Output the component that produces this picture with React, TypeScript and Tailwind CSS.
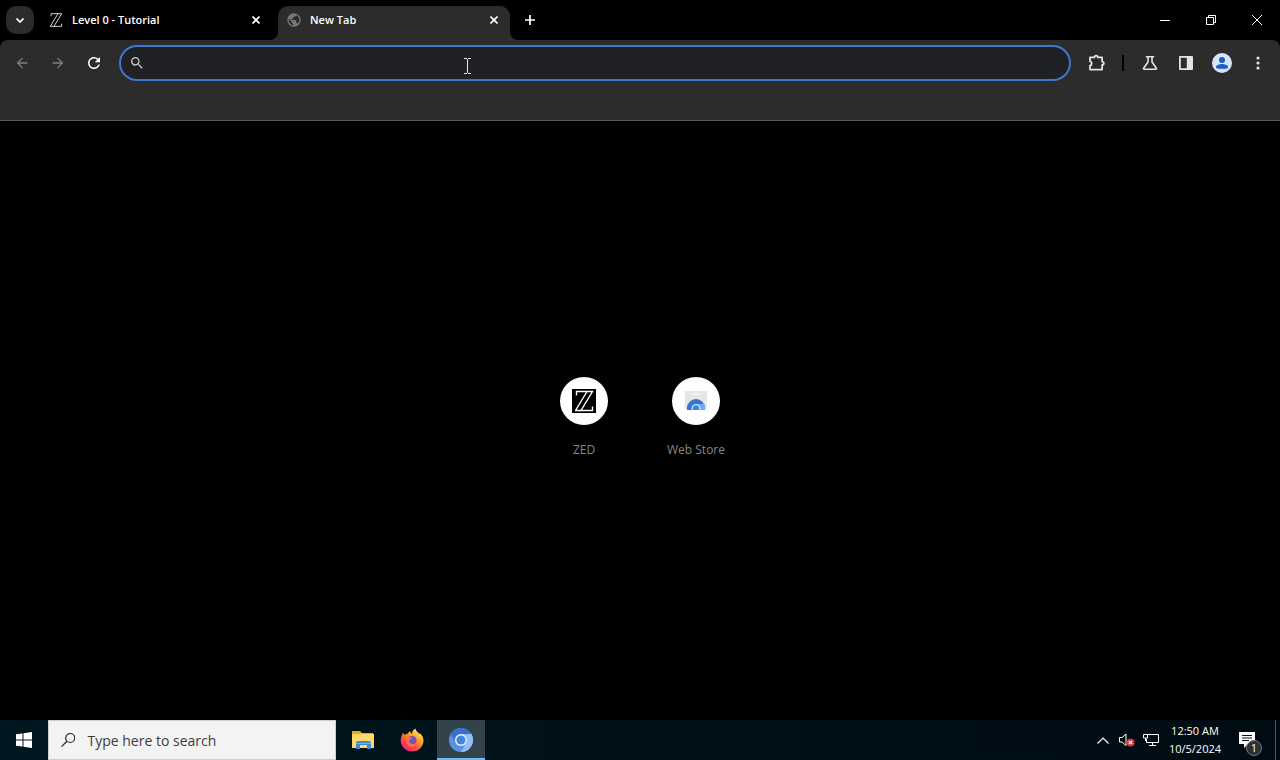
import type { ReactNode } from "react";
import { MdArrowBack, MdArrowForward, MdPublic, MdRefresh, MdSearch } from "react-icons/md";

function ZedMark({ className }: { className: string }) {
  return (
    <svg viewBox="0 0 24 24" className={className} fill="none" stroke="currentColor" strokeWidth="1.4">
      <path d="M4.500 6.500V2.500H20.500L9 21.500H20.500V17.500" />
      <path d="M3 21.500H9M3.500 21.500L15 2.500" />
    </svg>
  );
}

function CloseIcon() {
  return (
    <svg viewBox="0 0 8 8" className="h-2 w-2" stroke="currentColor" strokeWidth="1.6">
      <path d="M.5 .5l7 7M7.500 .5l-7 7" />
    </svg>
  );
}

function Tab({ title, icon, active }: { title: string; icon: ReactNode; active?: boolean }) {
  return (
    <div
      className={`relative flex h-[34px] items-center pb-[6px] pl-2 ${
        active ? "w-[232px] rounded-t-[10px] bg-[#2c2c2c] pr-2" : "w-[238px] pr-[14px]"
      }`}
    >
      {active && (
        <>
          <svg viewBox="0 0 8 8" className="absolute bottom-0 -left-2 h-2 w-2" fill="#2c2c2c">
            <path d="M8 0v8H0a8 8 0 0 0 8-8z" />
          </svg>
          <svg viewBox="0 0 8 8" className="absolute -right-2 bottom-0 h-2 w-2" fill="#2c2c2c">
            <path d="M0 0v8h8a8 8 0 0 1-8-8z" />
          </svg>
        </>
      )}
      {icon}
      <span className="ml-2 flex-1 truncate text-[11px] leading-5 font-semibold text-white">{title}</span>
      <button aria-label={`Close ${title}`} className="flex h-4 w-4 items-center justify-center">
        <CloseIcon />
      </button>
    </div>
  );
}

function TabStrip() {
  return (
    <header className="flex h-10 items-end bg-black text-white">
      <button
        aria-label="Search tabs"
        className="mb-[6px] ml-[6px] flex h-7 w-7 items-center justify-center rounded-[10px] bg-[#2c2c2c]"
      >
        <svg viewBox="0 0 8 5" className="h-[5px] w-2" fill="none" stroke="currentColor" strokeWidth="1.6">
          <path d="M.5 .5L4 4 7.500 .5" />
        </svg>
      </button>
      <div className="ml-[6px] flex">
        <Tab title="Level 0 - Tutorial" icon={<ZedMark className="h-4 w-4 text-[#e0e0e0]" />} />
        <Tab title="New Tab" active icon={<MdPublic className="h-4 w-4 text-[#787878]" />} />
      </div>
      <button aria-label="New tab" className="mb-[6px] ml-[6px] flex h-7 w-7 items-center justify-center">
        <svg viewBox="0 0 12 12" className="h-3 w-3" stroke="currentColor" strokeWidth="1.7">
          <path d="M6 1v10M1 6h10" />
        </svg>
      </button>
      <div className="ml-auto flex h-10">
        <button aria-label="Minimize" className="flex w-[46px] items-center justify-center">
          <svg viewBox="0 0 10 10" className="h-[10px] w-[10px]" stroke="currentColor">
            <path d="M0 5.500h10" />
          </svg>
        </button>
        <button aria-label="Restore" className="flex w-[46px] items-center justify-center">
          <svg viewBox="0 0 10 10" className="h-[10px] w-[10px]" fill="none" stroke="currentColor">
            <path d="M.5 2.500h7v7h-7zM2.500 2.500v-2h7v7h-2" />
          </svg>
        </button>
        <button aria-label="Close" className="flex w-[46px] items-center justify-center">
          <svg viewBox="0 0 10 10" className="h-[10px] w-[10px]" stroke="currentColor">
            <path d="M0 0l10 10M10 0L0 10" />
          </svg>
        </button>
      </div>
    </header>
  );
}

function ToolButton({ label, children }: { label: string; children: ReactNode }) {
  return (
    <button aria-label={label} className="flex h-7 w-7 shrink-0 items-center justify-center">
      {children}
    </button>
  );
}

function Toolbar() {
  return (
    <div className="bg-black">
      <div className="h-[81px] rounded-t-lg border-b border-[#5a5a5a] bg-[#2c2c2c] pt-[5px]">
        <div className="flex items-center px-2 text-[#e3e3e3]">
          <div className="flex gap-2">
            <ToolButton label="Back">
              <MdArrowBack className="h-4 w-4 stroke-[#808080] text-[#808080]" />
            </ToolButton>
            <ToolButton label="Forward">
              <MdArrowForward className="h-4 w-4 stroke-[#808080] text-[#808080]" />
            </ToolButton>
            <ToolButton label="Reload">
              <MdRefresh className="h-[18px] w-[18px] text-white" />
            </ToolButton>
          </div>
          <div className="relative ml-[11px] flex h-9 flex-1 items-center rounded-full border-2 border-[#3f76cf] bg-[#202124] pl-2">
            <MdSearch className="h-4 w-4 text-[#c7c7c7]" />
            <input
              type="text"
              aria-label="Address and search bar"
              className="ml-2 h-6 flex-1 bg-transparent text-sm text-white outline-none"
            />
            {/* text pointer */}
            <svg
              viewBox="0 0 7 16"
              className="absolute top-[11px] left-[343px] h-4 w-[7px]"
              fill="none"
              stroke="#e8e8e8"
            >
              <path d="M0 .5h3M4 .5h3M3.500 1v14M0 15.500h3M4 15.500h3" />
            </svg>
          </div>
          <div className="ml-3 flex items-center">
            <ToolButton label="Extensions">
              <svg viewBox="0 0 18 18" className="h-[18px] w-[18px]" fill="none" stroke="currentColor" strokeWidth="1.8">
                <path
                  d="M2 3.400h4.400a1.700 1.700 0 0 1 3.400 0h4.300v4.200a1.700 1.700 0 0 1 0 3.400v4.600H2v-4a2.200 2.200 0 0 0 0-4.300z"
                  strokeLinejoin="round"
                />
              </svg>
            </ToolButton>
            <span className="mx-[11px] h-4 w-[2px] bg-black" />
            <div className="ml-px flex gap-2">
              <ToolButton label="Labs">
                <svg viewBox="0 0 16 16" className="h-4 w-4" fill="none" stroke="currentColor" strokeWidth="1.6">
                  <path
                    d="M3.800 1.800h8.400M6 2v5L1.600 13.200c-.3.6 0 1.100.6 1.100h11.600c.6 0 .9-.5.6-1.100L10 7V2"
                    strokeLinejoin="round"
                  />
                </svg>
              </ToolButton>
              <ToolButton label="Side panel">
                <svg viewBox="0 0 16 16" className="h-4 w-4" fill="currentColor">
                  <path
                    fillRule="evenodd"
                    d="M2 1h12a1 1 0 0 1 1 1v12a1 1 0 0 1-1 1H2a1 1 0 0 1-1-1V2a1 1 0 0 1 1-1zm.8 1.800v10.400h6V2.800z"
                  />
                </svg>
              </ToolButton>
              <ToolButton label="Profile">
                <svg viewBox="0 0 20 20" className="h-5 w-5">
                  <circle cx="10" cy="10" r="10" fill="#d7e5fb" />
                  <circle cx="10" cy="7" r="3" fill="#1b5fc4" />
                  <path d="M4 15v-1c0-2 3.500-3 6-3s6 1 6 3v1c-1 .6-2 .8-3 .8H7c-1 0-2-.2-3-.8z" fill="#1b5fc4" />
                </svg>
              </ToolButton>
              <ToolButton label="Menu">
                <svg viewBox="0 0 4 14" className="h-[14px] w-1" fill="currentColor">
                  <circle cx="2" cy="2" r="1.600" />
                  <circle cx="2" cy="7" r="1.600" />
                  <circle cx="2" cy="12" r="1.600" />
                </svg>
              </ToolButton>
            </div>
          </div>
        </div>
      </div>
    </div>
  );
}

function Shortcut({ label, children }: { label: string; children: ReactNode }) {
  return (
    <a href="#" className="flex h-28 w-28 flex-col items-center pt-4">
      <span className="flex h-12 w-12 items-center justify-center rounded-full bg-white">{children}</span>
      <span className="mt-4 text-xs leading-[18px] text-[#858585]">{label}</span>
    </a>
  );
}

function NewTabPage() {
  return (
    <main className="flex flex-1 items-center justify-center bg-black pb-[7px]">
      <Shortcut label="ZED">
        <span className="flex h-6 w-6 bg-black text-white">
          <ZedMark className="h-6 w-6" />
        </span>
      </Shortcut>
      <Shortcut label="Web Store">
        <svg viewBox="0 0 22 20" className="h-5 w-[22px]">
          <path d="M0 0h22v17a2 2 0 0 1-2 2H2a2 2 0 0 1-2-2z" fill="#e6e6e6" />
          <path d="M7 3h8" stroke="#f7f7f7" strokeWidth="1.6" />
          <path d="M2 19v-2a9 9 0 0 1 18 0v2z" fill="#3974d0" />
          <path d="M11 13h8a9 9 0 0 1 1 6h-5z" fill="#70a8f0" />
          <path d="M6.500 19v-1.500a4.500 4.500 0 0 1 9 0V19z" fill="#cfe4ff" />
          <path d="M7.800 19v-1.500a3.200 3.200 0 0 1 6.400 0V19z" fill="#3d86e8" />
        </svg>
      </Shortcut>
    </main>
  );
}

function FolderIcon() {
  return (
    <svg viewBox="0 0 22 20" className="h-5 w-[22px]">
      <path d="M0 1h8l2 2h11v15H0z" fill="#e5a52d" />
      <path d="M0 4h22v14H0z" fill="#ffd869" />
      <path d="M4 19v-6a2 2 0 0 1 2-2h11a2 2 0 0 1 2 2v6h-4v-4H8v4z" fill="#3c8cd2" />
      <path d="M4 13.500h15" stroke="#68b5ea" />
    </svg>
  );
}

function FirefoxIcon() {
  return (
    <svg viewBox="0 0 24 24" className="h-6 w-6">
      <defs>
        <linearGradient id="fox" x1="0.8" y1="0.1" x2="0.2" y2="0.95">
          <stop offset="0" stopColor="#fff04a" />
          <stop offset=".35" stopColor="#ff9a25" />
          <stop offset=".7" stopColor="#ff4747" />
          <stop offset="1" stopColor="#e8208c" />
        </linearGradient>
      </defs>
      <path
        d="M3.500 4.500C3.600 5.800 4 6.500 4.600 7c1-.9 2-1.200 3-1.200C8.200 4.500 9.200 3.700 10.500 3c-.2 1.400.4 2.300 1.500 2.800C12 3.300 13.500 1.500 15.500.5c.2 2.500 2.300 3.700 4 5.500.2-.2.3-.6.2-1C22.500 7.500 23.500 10 23.500 12.800 23.300 19 18.500 23.500 12.200 23.500 5.500 23.500.7 18.500.7 12.500.7 9.300 1.700 6.500 3.500 4.500z"
        fill="url(#fox)"
      />
      <circle cx="12" cy="12.500" r="4.600" fill="#7550c8" />
      <path
        d="M5.500 9.500c2.500-1.200 4.500-.3 6.500.5-.6 1.500-2.300 1.200-3 2-.3 3.500 3 5 6.500 3.500-.5 2.500-2.500 3.500-5 3.200-3-.6-5.500-4.400-5-9.200z"
        fill="#ff7139"
      />
    </svg>
  );
}

function ChromiumIcon() {
  return (
    <svg viewBox="0 0 24 24" className="h-6 w-6">
      <circle cx="12" cy="12" r="12" fill="#5c90e2" />
      <path d="M1.600 6A12 12 0 0 1 22.400 6H12a6 6 0 0 0-5.200 9z" fill="#3b70c9" />
      <path d="M22.400 6A12 12 0 0 1 12 24l5.200-9A6 6 0 0 0 12 6z" fill="#96bdf7" />
      <circle cx="12" cy="12" r="6" fill="#f0f6ff" />
      <circle cx="12" cy="12" r="4.600" fill="#4485e0" />
    </svg>
  );
}

function Taskbar() {
  return (
    <footer className="flex h-10 bg-linear-to-r from-[#00171f] via-[#001018] to-[#000c14] text-white">
      <button aria-label="Start" className="flex w-12 items-center justify-center">
        <svg viewBox="0 0 16 16" className="h-4 w-4" fill="#fff">
          <path d="M0 2.300l6.500-.9v6.100H0zM7.500 1.200L16 0v7.500H7.500zM0 8.500h6.500v6.100L0 13.700zM7.500 8.500H16V16l-8.500-1.200z" />
        </svg>
      </button>
      <label className="flex w-72 items-center border border-[#cfcfcf] bg-[#f3f3f3] pl-3 text-[#333]">
        <svg viewBox="0 0 16 16" className="h-4 w-4" fill="none" stroke="#222" strokeWidth="1.3">
          <circle cx="10.200" cy="5.800" r="5" />
          <path d="M6.600 9.400L.6 15.400" />
        </svg>
        <input
          type="text"
          aria-label="Search"
          placeholder="Type here to search"
          className="ml-3 w-full bg-transparent pt-[2px] text-sm outline-none placeholder:text-[#3c3c3c]"
        />
      </label>
      <div className="ml-[3px] flex gap-px">
        <button aria-label="File Explorer" className="flex w-12 items-center justify-center">
          <FolderIcon />
        </button>
        <button aria-label="Firefox" className="flex w-12 items-center justify-center">
          <FirefoxIcon />
        </button>
        <button
          aria-label="Chromium"
          className="flex w-12 items-center justify-center border-b-2 border-[#76b9ed] bg-[#32434b] pt-[2px]"
        >
          <ChromiumIcon />
        </button>
      </div>
      <div className="ml-auto flex items-center">
        <button aria-label="Show hidden icons" className="flex w-6 justify-center">
          <svg viewBox="0 0 12 7" className="h-[7px] w-3" fill="none" stroke="currentColor" strokeWidth="1.2">
            <path d="M.5 6.500L6 1l5.500 5.500" />
          </svg>
        </button>
        <button aria-label="Volume" className="flex w-6 justify-center">
          <svg viewBox="0 0 16 14" className="h-[14px] w-4">
            <path d="M.5 4.500h2.500l4-3.500v11.500l-4-3.500H.5z" fill="none" stroke="#fff" />
            <circle cx="11.500" cy="9.500" r="4" fill="#d9333f" />
            <path d="M9.800 7.800l3.400 3.400M13.200 7.800l-3.400 3.400" stroke="#fff" strokeWidth="1.200" />
          </svg>
        </button>
        <button aria-label="Network" className="flex w-6 justify-center">
          <svg viewBox="0 0 16 14" className="h-[14px] w-4" fill="none" stroke="currentColor">
            <path d="M5 1.500h10.500v8H3.500V6M9.500 9.500v3M6 12.500h7M.5 1.500h4v3.500h-4zM2.500 5v3" />
          </svg>
        </button>
        <time className="flex w-16 flex-col items-center text-[11px] leading-[18px]">
          <span>12:50 AM</span>
          <span>10/5/2024</span>
        </time>
        <button aria-label="Notifications" className="relative flex h-10 w-12 items-center justify-center">
          <svg viewBox="0 0 16 16" className="mr-2 h-4 w-4">
            <path d="M0 0h16v12H9l-4 4v-4H0z" fill="#fff" />
            <path d="M3 3.500h10M3 6h10M3 8.500h7" stroke="#08141b" />
          </svg>
          <span className="absolute right-[13px] bottom-1 flex h-4 w-4 items-center justify-center rounded-full border border-[#777] bg-[#2a3238] text-[11px] leading-4">
            1
          </span>
        </button>
        <span className="mr-1 h-10 w-px bg-[#4b555b]" />
      </div>
    </footer>
  );
}

export default function App() {
  return (
    <div className="flex min-h-screen flex-col bg-black font-['Open_Sans','Noto_Sans',sans-serif]">
      <TabStrip />
      <Toolbar />
      <NewTabPage />
      <Taskbar />
    </div>
  );
}
